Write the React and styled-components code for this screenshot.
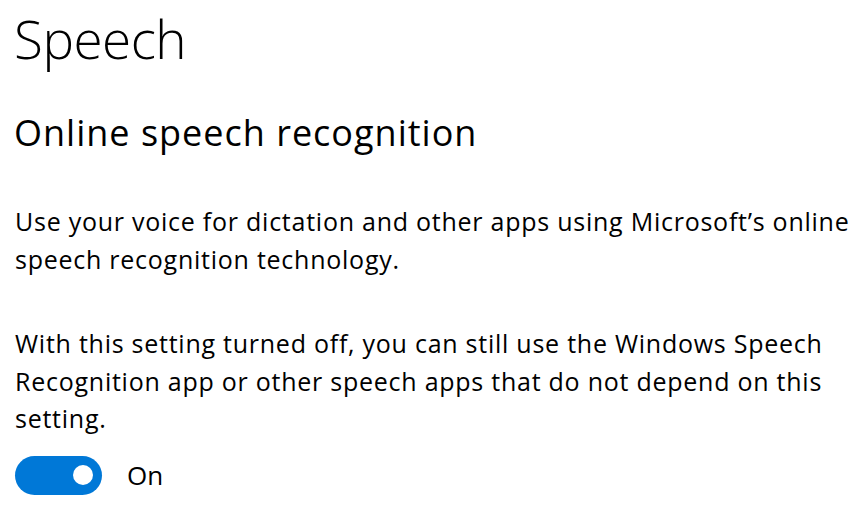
import React from 'react';
import styled, { createGlobalStyle } from 'styled-components';

const Global = createGlobalStyle`
  html, body {
    margin: 0;
    padding: 0;
    background: #ffffff;
  }
  body {
    font-family: "Open Sans", "Noto Sans", "Liberation Sans", sans-serif;
    color: #000000;
    -webkit-font-smoothing: antialiased;
  }
`;

const Page = styled.main`
  display: flex;
  flex-direction: column;
  padding: 0 0 0 14px;
  width: 864px;
  height: 511px;
  box-sizing: border-box;
  overflow: hidden;
`;

const Title = styled.h1`
  margin: 3px 0 0 0;
  font-size: 53px;
  font-weight: 300;
  line-height: 72px;
  letter-spacing: -0.5px;
`;

const Subtitle = styled.h2`
  margin: 36px 0 0 0;
  font-size: 36px;
  font-weight: 400;
  line-height: 44px;
  letter-spacing: 1px;
`;

const Paragraph = styled.p`
  margin: ${(p) => p.$top}px 0 0 1px;
  font-size: 25px;
  font-weight: 400;
  line-height: 37.5px;
  letter-spacing: 0.75px;
  width: 849px;
`;

const ToggleRow = styled.label`
  display: flex;
  align-items: center;
  gap: 25px;
  margin: 18px 0 0 1px;
  cursor: pointer;
`;

const Track = styled.span`
  display: flex;
  align-items: center;
  justify-content: ${(p) => (p.$on ? 'flex-end' : 'flex-start')};
  box-sizing: border-box;
  width: 87px;
  height: 39px;
  padding: 0 9px;
  border-radius: 20px;
  background: ${(p) => (p.$on ? '#0078d7' : '#ffffff')};
  border: ${(p) => (p.$on ? 'none' : '2px solid #333')};
`;

const Knob = styled.span`
  width: 20px;
  height: 20px;
  border-radius: 50%;
  background: ${(p) => (p.$on ? '#ffffff' : '#333')};
`;

const ToggleLabel = styled.span`
  font-size: 26px;
  line-height: 32px;
`;

export default function App() {
  const [on, setOn] = React.useState(true);
  return (
    <>
      <Global />
      <Page>
        <Title>Speech</Title>
        <Subtitle>Online speech recognition</Subtitle>
        <Paragraph $top={48}>
          Use your voice for dictation and other apps using Microsoft’s online
          speech recognition technology.
        </Paragraph>
        <Paragraph $top={47}>
          With this setting turned off, you can still use the Windows Speech
          Recognition app or other speech apps that do not depend on this
          setting.
        </Paragraph>
        <ToggleRow onClick={() => setOn(!on)}>
          <Track $on={on}>
            <Knob $on={on} />
          </Track>
          <ToggleLabel>{on ? 'On' : 'Off'}</ToggleLabel>
        </ToggleRow>
      </Page>
    </>
  );
}
